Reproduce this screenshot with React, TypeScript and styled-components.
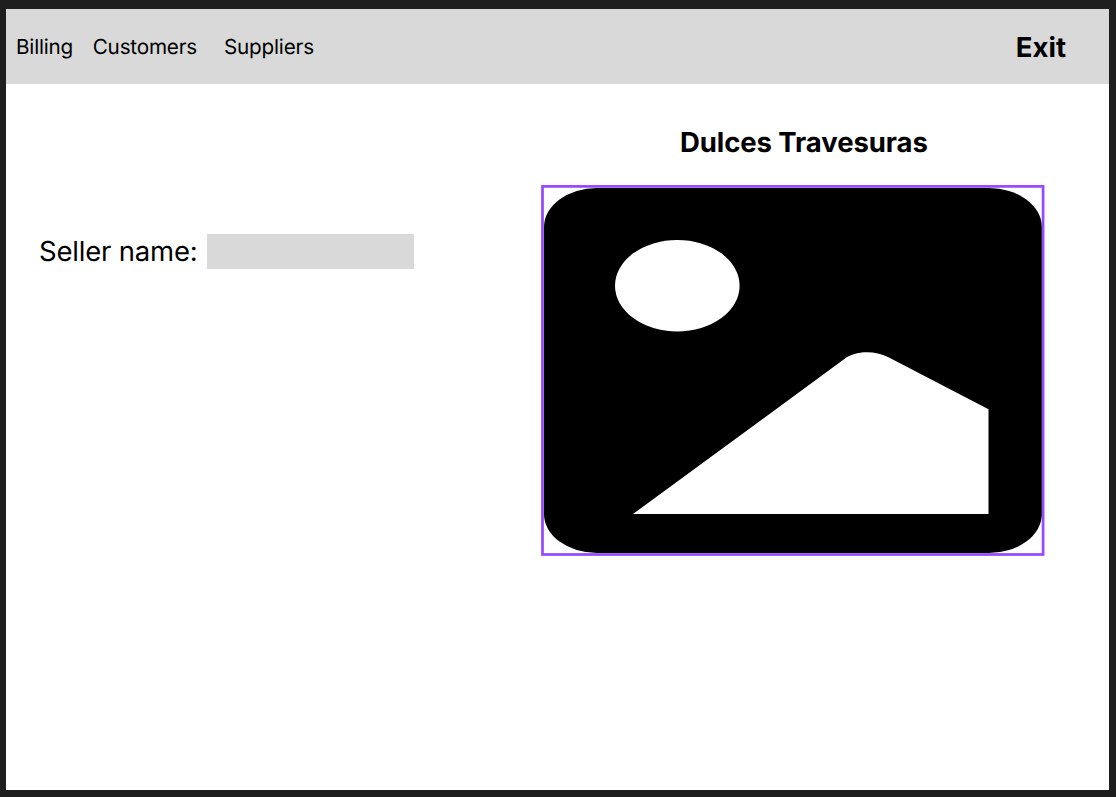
import styled, { createGlobalStyle } from "styled-components";

const GlobalStyle = createGlobalStyle`
  * { box-sizing: border-box; }
  body { margin: 0; background: #1e1e1e; }
`;

const Backdrop = styled.div`
  width: 1116px;
  height: 797px;
  padding: 9px 7px 7px 6px;
  background: #1e1e1e;
  color: #000;
  font-family: Inter, sans-serif;
  text-rendering: geometricPrecision;
`;

const Page = styled.main`
  display: flex;
  flex-direction: column;
  height: 781px;
  background: #fff;
`;

const TopBar = styled.header`
  display: flex;
  align-items: center;
  justify-content: space-between;
  height: 75px;
  padding: 0 43px 0 10px;
  background: #d9d9d9;
`;

const Nav = styled.nav`
  display: flex;
  align-items: center;
`;

const NavItem = styled.a<{ $gap?: number }>`
  margin-right: ${({ $gap = 0 }) => $gap}px;
  font-size: 20.7px;
  line-height: 26px;
  letter-spacing: -0.2px;
  white-space: nowrap;
`;

const ExitLink = styled.a`
  font-size: 27.5px;
  font-weight: 700;
  line-height: 34px;
`;

const Content = styled.div`
  display: flex;
  flex: 1;
`;

const FormColumn = styled.section`
  width: 535px;
  padding: 150px 0 0 33px;
`;

const Field = styled.label`
  display: flex;
  align-items: flex-start;
  justify-content: space-between;
  width: 375px;
  height: 35px;
  font-size: 27.5px;
  line-height: 34px;
  letter-spacing: -0.2px;
  white-space: nowrap;
`;

const FieldInput = styled.input`
  width: 207px;
  height: 35px;
  padding: 0 8px;
  border: 0;
  border-radius: 0;
  background: #d9d9d9;
  font: inherit;
  outline: none;
`;

const BrandColumn = styled.section`
  width: 504px;
  padding-top: 41px;
`;

const BrandName = styled.h1`
  margin: 0 0 26px 139px;
  font-size: 27.5px;
  font-weight: 700;
  line-height: 34px;
  letter-spacing: -0.08px;
  white-space: nowrap;
`;

const Picture = styled.svg`
  display: block;
`;

export default function App() {
  return (
    <>
      <GlobalStyle />
      <Backdrop>
        <Page>
          <TopBar>
            <Nav>
              <NavItem $gap={19.6}>Billing</NavItem>
              <NavItem $gap={27}>Customers</NavItem>
              <NavItem>Suppliers</NavItem>
            </Nav>
            <ExitLink>Exit</ExitLink>
          </TopBar>
          <Content>
            <FormColumn>
              <Field>
                Seller name:
                <FieldInput type="text" />
              </Field>
            </FormColumn>
            <BrandColumn>
              <BrandName>Dulces Travesuras</BrandName>
              <Picture width="504" height="371" viewBox="541 185 504 371">
                <rect x="542.5" y="186.4" width="500.6" height="368.1" fill="#fff" stroke="#9747ff" strokeWidth="2.7" />
                <rect x="544" y="188" width="497.8" height="365" rx="53" ry="39" />
                <ellipse cx="677.3" cy="285.7" rx="62.3" ry="45.8" fill="#fff" />
                <path d="M633 514 L843 360 C854 350.5 874 349.9 888 357 L988.5 409.3 V514 Z" fill="#fff" />
              </Picture>
            </BrandColumn>
          </Content>
        </Page>
      </Backdrop>
    </>
  );
}
